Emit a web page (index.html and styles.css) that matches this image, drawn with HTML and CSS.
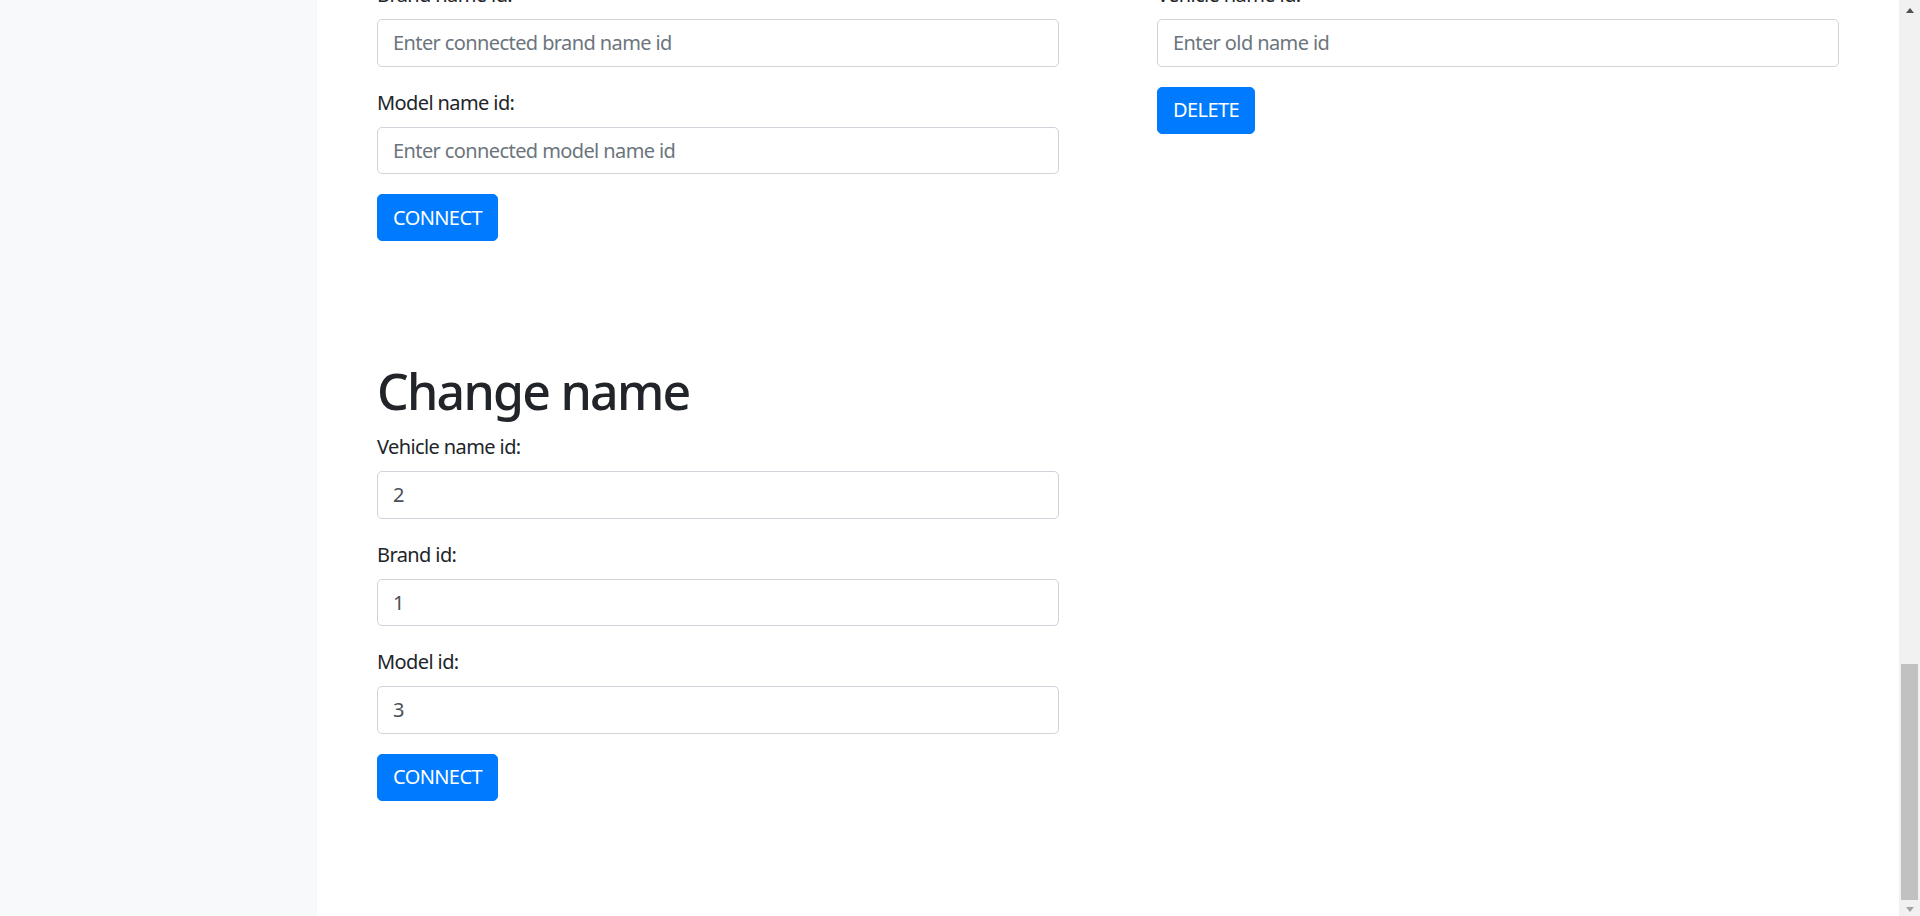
FILE: index.html
```html
<!DOCTYPE html>
<html lang="en">
<head>
<meta charset="utf-8">
<title>Vehicles admin</title>
<link rel="stylesheet" href="styles.css">
</head>
<body>
  <aside class="sidebar"></aside>
  <main class="main">
    <div class="content">
      <section class="section">
        <div class="row">
          <form class="col">
            <div class="form-group">
              <label>Brand name id:</label>
              <input class="form-control" type="text" placeholder="Enter connected brand name id">
            </div>
            <div class="form-group">
              <label>Model name id:</label>
              <input class="form-control" type="text" placeholder="Enter connected model name id">
            </div>
            <button type="button" class="btn">CONNECT</button>
          </form>
          <form class="col">
            <div class="form-group">
              <label>Vehicle name id:</label>
              <input class="form-control" type="text" placeholder="Enter old name id">
            </div>
            <button type="button" class="btn">DELETE</button>
          </form>
        </div>
      </section>
      <section class="section section-change">
        <div class="row">
          <form class="col">
            <h1 class="title">Change name</h1>
            <div class="form-group">
              <label>Vehicle name id:</label>
              <input class="form-control" type="text" value="2">
            </div>
            <div class="form-group">
              <label>Brand id:</label>
              <input class="form-control" type="text" value="1">
            </div>
            <div class="form-group">
              <label>Model id:</label>
              <input class="form-control" type="text" value="3">
            </div>
            <button type="button" class="btn">CONNECT</button>
          </form>
          <div class="col"></div>
        </div>
      </section>
    </div>
  </main>
  <div class="scrollbar">
    <div class="sb-btn sb-up"><span class="tri-up"></span></div>
    <div class="sb-track"></div>
    <div class="sb-thumb"></div>
    <div class="sb-btn sb-down"><span class="tri-down"></span></div>
  </div>
</body>
</html>
```

FILE: styles.css
```css
* {
  box-sizing: border-box;
}

html, body {
  margin: 0;
  height: 916px;
  overflow: hidden;
}

body {
  display: flex;
  font-family: "Noto Sans", "Open Sans", sans-serif;
  font-size: 20px;
  line-height: 30px;
  letter-spacing: -0.03em;
  color: #212529;
  background: #fff;
}

.sidebar {
  width: 317px;
  flex: 0 0 317px;
  background: #f8f9fa;
}

.main {
  flex: 1 1 auto;
  padding-left: 60px;
  overflow: hidden;
  background: #fff;
}

.content {
  margin-top: -21px;
}

.row {
  display: grid;
  grid-template-columns: 682px 682px;
  column-gap: 98px;
}

.form-group {
  margin-bottom: 20px;
}

label {
  display: inline-block;
  margin-bottom: 10px;
  padding-top: 2px;
  font-size: 20px;
  line-height: 28px;
}

.form-control {
  display: block;
  width: 100%;
  height: 47.5px;
  padding: 7.5px 15px;
  font-family: inherit;
  font-size: 20px;
  line-height: 30px;
  letter-spacing: -0.03em;
  color: #495057;
  background: #fff;
  border: 1px solid #ced4da;
  border-radius: 5px;
  outline: none;
}

.form-control::placeholder {
  color: #6c757d;
  opacity: 1;
}

.btn {
  display: inline-block;
  padding: 7.5px 15px;
  font-family: inherit;
  font-size: 20px;
  line-height: 30px;
  letter-spacing: -0.03em;
  color: #fff;
  background: #007bff;
  border: 1px solid #007bff;
  border-radius: 5px;
  cursor: pointer;
}

.section-change {
  margin-top: 120px;
}

.title {
  margin: 0 0 10px;
  font-size: 50px;
  line-height: 60px;
  font-weight: 500;
  letter-spacing: -0.035em;
}

.scrollbar {
  flex: 0 0 21px;
  width: 21px;
  background: #f1f1f1;
  display: flex;
  flex-direction: column;
}

.sb-btn {
  display: flex;
  justify-content: center;
}

.sb-up {
  height: 17px;
  padding-top: 8px;
}

.sb-down {
  height: 16px;
  padding-top: 7px;
}

.tri-up {
  width: 0;
  height: 0;
  border-left: 4.5px solid transparent;
  border-right: 4.5px solid transparent;
  border-bottom: 5px solid #505050;
}

.tri-down {
  width: 0;
  height: 0;
  border-left: 4.5px solid transparent;
  border-right: 4.5px solid transparent;
  border-top: 5px solid #a3a3a3;
}

.sb-track {
  flex: 1 1 auto;
}

.sb-thumb {
  height: 236px;
  margin-left: 2px;
  width: 17px;
  background: #c1c1c1;
}
```
